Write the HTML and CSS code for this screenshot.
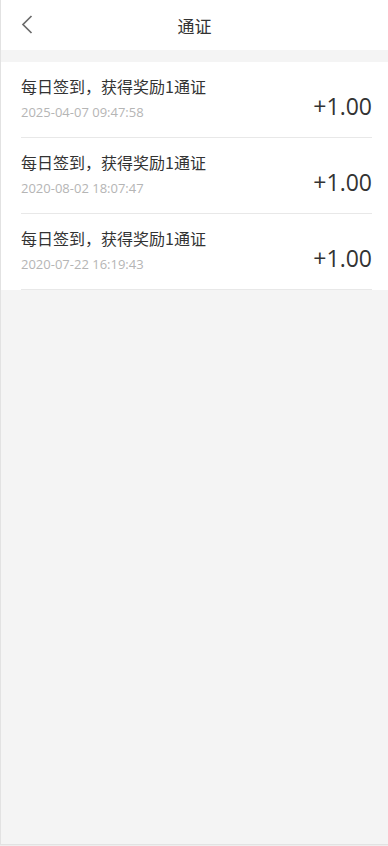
FILE: index.html
```html
<!DOCTYPE html>
<html lang="zh">
<head>
<meta charset="utf-8">
<title>通证</title>
<link rel="stylesheet" href="styles.css">
</head>
<body>
<div class="page">
  <header class="nav">
    <span class="back">
      <svg width="12" height="19" viewBox="0 0 12 19"><path d="M10.5 1 L2 9.5 L10.5 18" fill="none" stroke="#6b6b6b" stroke-width="1.7"/></svg>
    </span>
    <h1 class="title">通证</h1>
  </header>
  <ul class="list">
    <li class="item">
      <div class="info">
        <div class="name">每日签到，获得奖励1通证</div>
        <div class="date">2025-04-07 09:47:58</div>
      </div>
      <div class="amount">+1.00</div>
    </li>
    <li class="item">
      <div class="info">
        <div class="name">每日签到，获得奖励1通证</div>
        <div class="date">2020-08-02 18:07:47</div>
      </div>
      <div class="amount">+1.00</div>
    </li>
    <li class="item">
      <div class="info">
        <div class="name">每日签到，获得奖励1通证</div>
        <div class="date">2020-07-22 16:19:43</div>
      </div>
      <div class="amount">+1.00</div>
    </li>
  </ul>
</div>
</body>
</html>
```

FILE: styles.css
```css
html, body {
  margin: 0;
  padding: 0;
  background: #eeeeee;
}
body {
  font-family: "Open Sans", "Noto Sans CJK SC", sans-serif;
  color: #333333;
}
.page {
  box-sizing: border-box;
  height: 845px;
  background: #f4f4f4;
  border-left: 1px solid #e2e2e2;
  border-bottom: 1px solid #e2e2e2;
}
.nav {
  position: relative;
  height: 50px;
  background: #ffffff;
  display: flex;
  align-items: center;
  justify-content: center;
}
.back {
  position: absolute;
  left: 20px;
  top: 15px;
  display: flex;
}
.title {
  margin: 0;
  font-size: 17px;
  font-weight: normal;
  font-family: "Noto Sans CJK SC", sans-serif;
  color: #333333;
}
.list {
  list-style: none;
  margin: 12px 0 0;
  padding: 0;
  background: #ffffff;
}
.item {
  margin: 0 16px 0 20px;
  padding: 14px 0 17px;
  height: 44px;
  display: flex;
  justify-content: space-between;
  align-items: flex-end;
  border-bottom: 1px solid #e8e8e8;
}
.name {
  font-family: "Noto Sans CJK SC", sans-serif;
  font-size: 16px;
  line-height: 20px;
  color: #333333;
}
.date {
  margin-top: 8px;
  font-size: 13px;
  line-height: 16px;
  color: #b5b5b5;
}
.amount {
  font-size: 23px;
  line-height: 26px;
  color: #333333;
  margin-bottom: 1px;
}
```
